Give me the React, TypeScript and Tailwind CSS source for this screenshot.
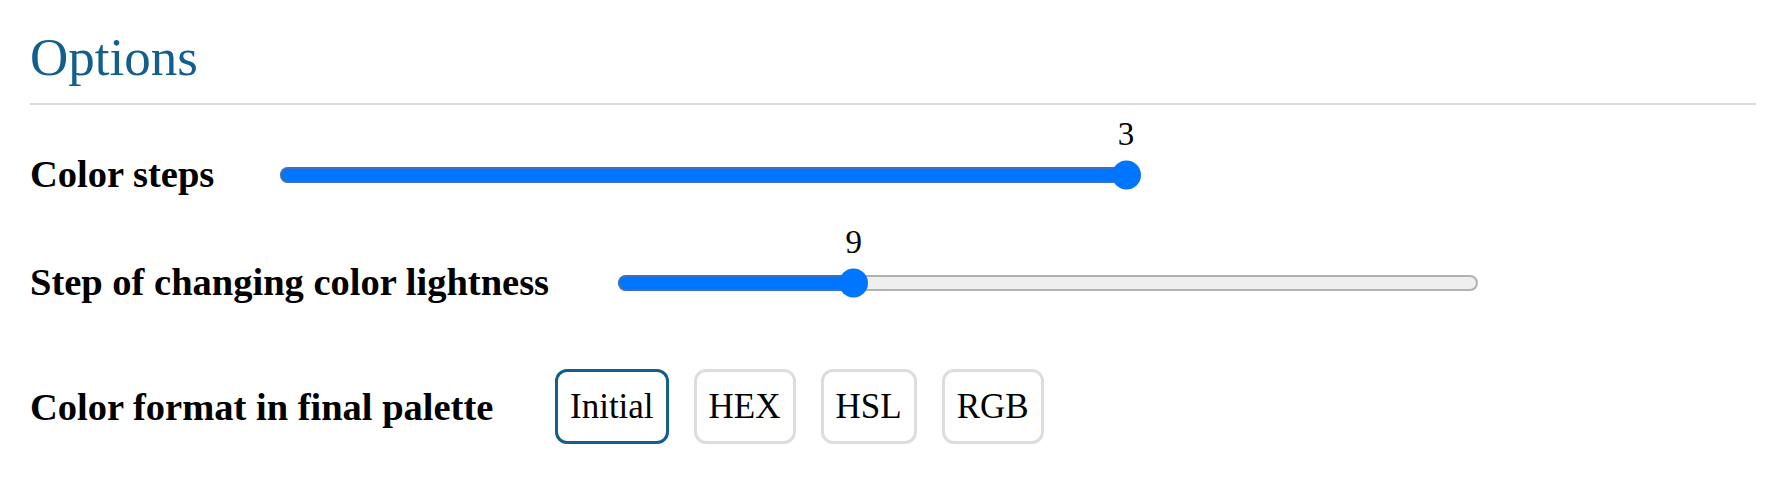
import { useState } from "react";

type SliderProps = {
    min: number;
    max: number;
    value: number;
};

// track is 860px wide, thumb centre runs from 14px to 846px
function Slider({ min, max, value }: SliderProps) {
    const pos = 14 + ((value - min) / (max - min)) * 832;

    return (
        <div className="relative mt-[14px] h-[16px] w-[860px] shrink-0">
            <div className="h-full w-full rounded-full border-2 border-[#b2b2b2] bg-[#efefef]" />
            <div
                className="absolute left-0 top-0 h-full rounded-l-full border-2 border-r-0 border-[#3b6fc0] bg-[#0075ff]"
                style={{ width: pos }}
            />
            <div
                className="absolute top-1/2 h-[29px] w-[29px] -translate-y-1/2 rounded-full bg-[#0075ff]"
                style={{ left: pos - 14.5 }}
            />
            <span
                className="absolute top-[-49px] -translate-x-1/2 text-[33px] leading-[33px] text-black"
                style={{ left: pos }}>
                {value}
            </span>
        </div>
    );
}

const formats = ["Initial", "HEX", "HSL", "RGB"];

export default function App() {
    const [format, setFormat] = useState("Initial");

    return (
        <div className="min-h-[494px] bg-white px-[30px] pt-[27px] font-['Liberation_Serif',serif] text-black">
            <h1 className="text-[53px] leading-[61px] font-normal text-[#125f8d]">
                Options
            </h1>
            <hr className="mt-[15px] border-0 border-t-2 border-[#d9d9d9]" />

            <div className="mt-[35px] flex items-center">
                <label className="mt-[12px] w-[250px] shrink-0 text-[38.5px] leading-[44px] font-bold">
                    Color steps
                </label>
                <Slider min={1} max={3} value={3} />
            </div>

            <div className="mt-[52px] flex items-center">
                <label className="mt-[12px] w-[588px] shrink-0 text-[38.5px] leading-[44px] font-bold">
                    Step of changing color lightness
                </label>
                <Slider min={1} max={31} value={9} />
            </div>

            <div className="mt-[65px] flex items-center">
                <label className="w-[525px] shrink-0 text-[38.5px] leading-[44px] font-bold">
                    Color format in final palette
                </label>
                <div className="flex gap-[25px]">
                    {formats.map((f) => (
                        <button
                            key={f}
                            onClick={() => setFormat(f)}
                            className={
                                f === format
                                    ? "rounded-[12px] border-[3px] border-[#125f8d] bg-white px-[12px] py-[14px] text-[35px] leading-[41px] text-black"
                                    : "rounded-[12px] border-[3px] border-[#dddddd] bg-white px-[12px] py-[14px] text-[35px] leading-[41px] text-black"
                            }>
                            {f}
                        </button>
                    ))}
                </div>
            </div>
        </div>
    );
}
